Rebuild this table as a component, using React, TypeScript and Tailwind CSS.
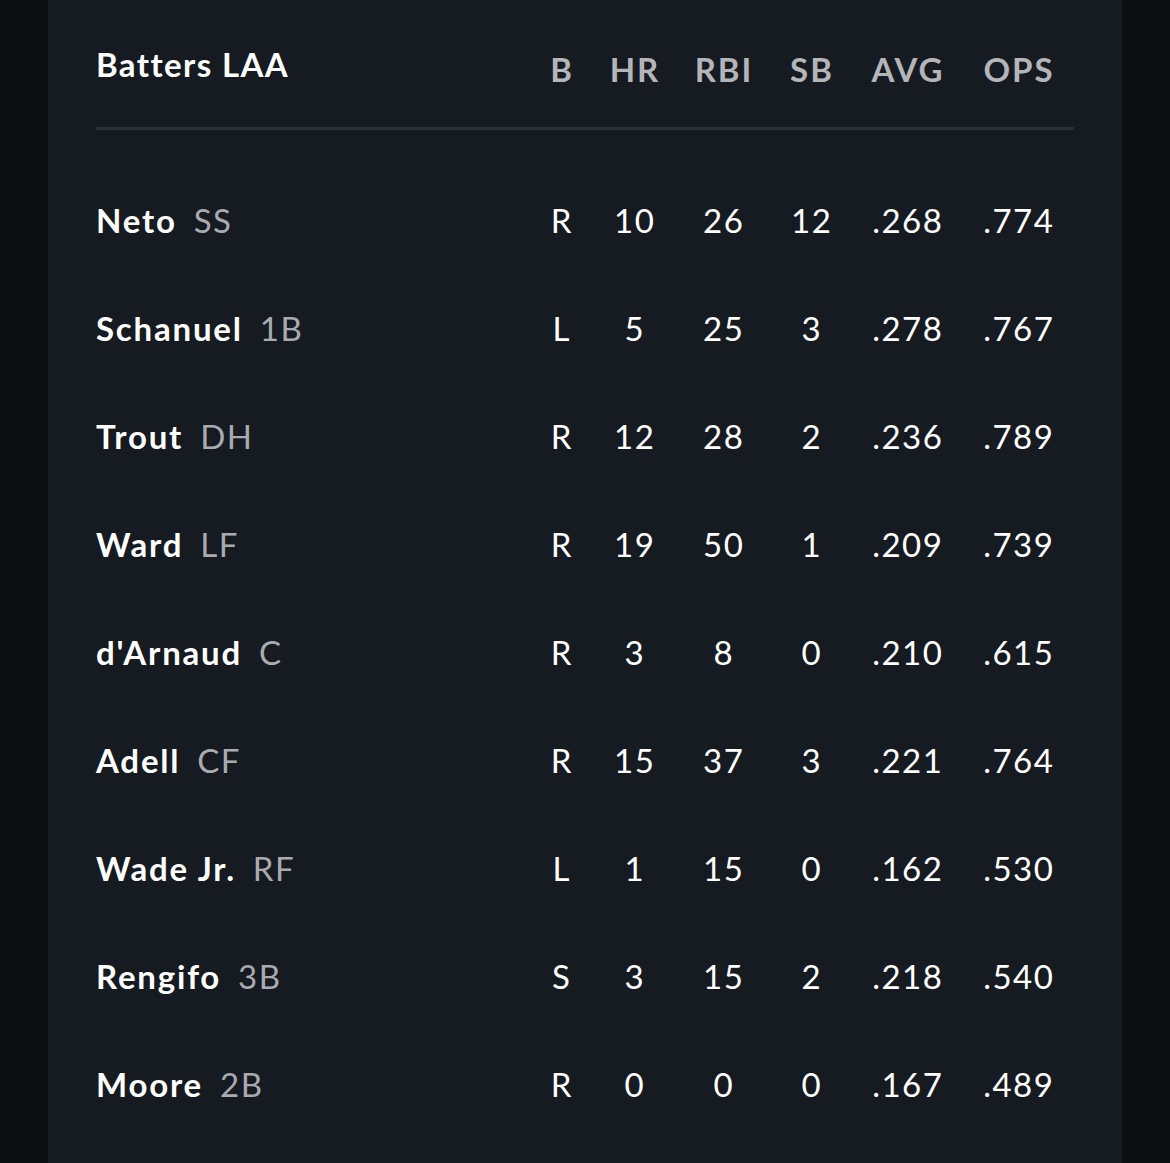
import React from "react";

const rows: [string, string, string, string, string, string, string, string][] = [
  ["Neto", "SS", "R", "10", "26", "12", ".268", ".774"],
  ["Schanuel", "1B", "L", "5", "25", "3", ".278", ".767"],
  ["Trout", "DH", "R", "12", "28", "2", ".236", ".789"],
  ["Ward", "LF", "R", "19", "50", "1", ".209", ".739"],
  ["d'Arnaud", "C", "R", "3", "8", "0", ".210", ".615"],
  ["Adell", "CF", "R", "15", "37", "3", ".221", ".764"],
  ["Wade Jr.", "RF", "L", "1", "15", "0", ".162", ".530"],
  ["Rengifo", "3B", "S", "3", "15", "2", ".218", ".540"],
  ["Moore", "2B", "R", "0", "0", "0", ".167", ".489"],
];

const grid = "grid grid-cols-[1fr_62px_84px_94px_82px_110px_112px]";

export default function App() {
  return (
    <div
      className="min-h-[1163px] w-full bg-[#0c0f12] flex justify-center"
      style={{ fontFamily: "Lato, 'Open Sans', sans-serif" }}
    >
      <div className="w-[1074px] min-h-[1163px] bg-[#161a21] px-[48px] pt-[24px]">
        <div className={`${grid} h-[80px] items-center`}>
          <div className="text-[33px] font-bold text-white leading-none tracking-[1.4px]">Batters LAA</div>
          {["B", "HR", "RBI", "SB", "AVG", "OPS"].map((h) => (
            <div key={h} className="text-center text-[33px] font-bold text-[#b3b5b9] leading-none pt-[10px] tracking-[2px] indent-[2px]">
              {h}
            </div>
          ))}
        </div>
        <div className="mt-[23px] h-[3px] bg-[#2a303a]" />
        <div className="mt-[36px]">
          {rows.map((r) => (
            <div key={r[0]} className={`${grid} h-[108px] items-center`}>
              <div className="flex items-baseline leading-none">
                <span className="text-[33px] font-bold text-white tracking-[1.8px]">{r[0]}</span>
                <span className="ml-[17px] text-[33px] text-[#a9abb0] tracking-[1.5px]">{r[1]}</span>
              </div>
              {r.slice(2).map((v, i) => (
                <div key={i} className="text-center text-[33px] text-white leading-none tracking-[1.5px] indent-[1.5px]">
                  {v}
                </div>
              ))}
            </div>
          ))}
        </div>
      </div>
    </div>
  );
}
